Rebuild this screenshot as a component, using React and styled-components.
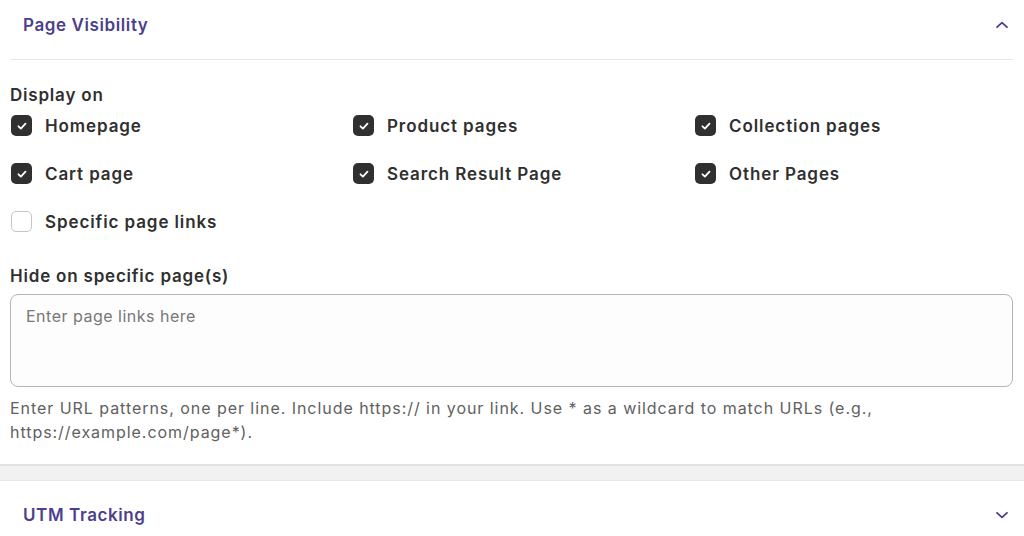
import React from "react";
import styled, { createGlobalStyle } from "styled-components";

const GlobalStyle = createGlobalStyle`
  * { box-sizing: border-box; }
  body {
    margin: 0;
    background: #ffffff;
    font-family: Inter, "Noto Sans", sans-serif;
    color: #303030;
  }
`;

const options = [
  { label: "Homepage", checked: true },
  { label: "Product pages", checked: true },
  { label: "Collection pages", checked: true },
  { label: "Cart page", checked: true },
  { label: "Search Result Page", checked: true },
  { label: "Other Pages", checked: true },
  { label: "Specific page links", checked: false },
];

const Chevron = ({ up }) => (
  <svg width="14" height="14" viewBox="0 0 14 14" fill="none">
    <path
      d={up ? "M2 9.2 L7 4.6 L12 9.2" : "M2 4.8 L7 9.4 L12 4.8"}
      stroke="#4b3f8e"
      strokeWidth="1.8"
      strokeLinecap="round"
      strokeLinejoin="round"
    />
  </svg>
);

const Checkbox = ({ checked, label }) => (
  <OptionStyles>
    <Box $checked={checked}>
      {checked && (
        <svg width="12" height="12" viewBox="0 0 12 12" fill="none">
          <path
            d="M2.5 6.3 L4.9 8.6 L9.5 3.6"
            stroke="#fff"
            strokeWidth="1.8"
            strokeLinecap="round"
            strokeLinejoin="round"
          />
        </svg>
      )}
    </Box>
    <span>{label}</span>
  </OptionStyles>
);

const App = () => {
  return (
    <>
      <GlobalStyle />
      <Panel>
        <Header>
          <h5>Page Visibility</h5>
          <Chevron up />
        </Header>
        <Body>
          <FieldLabel>Display on</FieldLabel>
          <OptionsGrid>
            {options.map((o) => (
              <Checkbox key={o.label} {...o} />
            ))}
          </OptionsGrid>
          <FieldLabel className="hide-label">Hide on specific page(s)</FieldLabel>
          <TextArea placeholder="Enter page links here" />
          <HelpText>
            Enter URL patterns, one per line. Include https:// in your link. Use
            * as a wildcard to match URLs (e.g., https://example.com/page*).
          </HelpText>
        </Body>
      </Panel>
      <Gap />
      <Panel>
        <Header $closed>
          <h5>UTM Tracking</h5>
          <Chevron />
        </Header>
      </Panel>
    </>
  );
};

const Panel = styled.section`
  width: 100%;
  background: #fff;
`;

const Header = styled.div`
  display: flex;
  align-items: center;
  justify-content: space-between;
  height: ${(p) => (p.$closed ? "68px" : "60px")};
  padding: ${(p) => (p.$closed ? "0 15px 0 23px" : "0 4px 10px 13px")};
  margin: ${(p) => (p.$closed ? "0" : "0 11px 0 10px")};
  border-bottom: ${(p) => (p.$closed ? "none" : "1px solid #e6e6e6")};

  h5 {
    margin: 0;
    font-size: 17px;
    font-weight: 600;
    color: #4b3f8e;
    letter-spacing: 0.6px;
  }

  svg {
    display: block;
  }
`;

const Body = styled.div`
  padding: 23px 11px 20px 10px;
`;

const FieldLabel = styled.div`
  font-size: 17px;
  font-weight: 600;
  line-height: 24px;
  letter-spacing: 0.8px;
  color: #303030;
  margin-bottom: 8px;

  &.hide-label {
    margin-top: 32px;
    margin-bottom: 6px;
  }
`;

const OptionsGrid = styled.div`
  display: grid;
  grid-template-columns: 342px 342px 1fr;
  row-gap: 27px;
  padding-left: 1px;
`;

const OptionStyles = styled.label`
  display: flex;
  align-items: center;
  gap: 13px;
  height: 21px;

  span {
    font-size: 17px;
    font-weight: 600;
    letter-spacing: 0.9px;
    color: #303030;
  }
`;

const Box = styled.div`
  width: 21px;
  height: 21px;
  border-radius: 5px;
  display: flex;
  align-items: center;
  justify-content: center;
  background: ${(p) => (p.$checked ? "#303030" : "#fff")};
  border: ${(p) => (p.$checked ? "none" : "1px solid #c4c4c4")};
`;

const TextArea = styled.textarea`
  display: block;
  width: 100%;
  height: 93px;
  resize: none;
  border: 1px solid #b5b5b5;
  border-radius: 8px;
  background: #fdfdfd;
  padding: 11px 15px;
  font-family: Inter, "Noto Sans", sans-serif;
  font-size: 16px;
  letter-spacing: 0.5px;
  outline: none;

  &::placeholder {
    color: #777;
  }
`;

const HelpText = styled.p`
  margin: 9px 0 0;
  font-size: 16px;
  line-height: 24px;
  letter-spacing: 0.95px;
  color: #616161;
`;

const Gap = styled.div`
  height: 17px;
  background: #f1f1f1;
  border-top: 2px solid #e1e1e1;
  border-bottom: 1px solid #e8e8e8;
`;

export default App;
